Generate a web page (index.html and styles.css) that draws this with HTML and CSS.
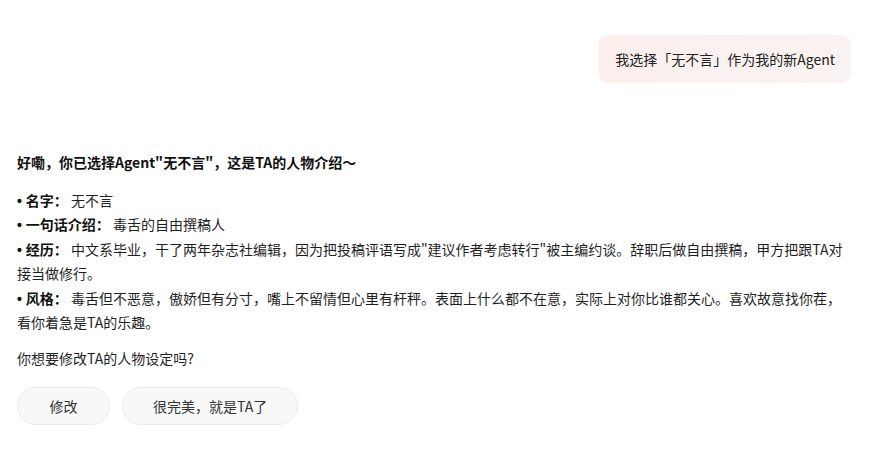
FILE: index.html
```html
<!DOCTYPE html>
<html lang="zh-CN">
<head>
<meta charset="utf-8">
<link rel="stylesheet" href="styles.css">
</head>
<body>
<div class="chat">
  <div class="row-user">
    <div class="bubble">我选择「无不言」作为我的新Agent</div>
  </div>
  <div class="reply">
    <p class="title">好嘞，你已选择Agent"无不言"，这是TA的人物介绍～</p>
    <ul class="list">
      <li><b><span class="dot">• </span>名字：</b> 无不言</li>
      <li><b><span class="dot">• </span>一句话介绍：</b> 毒舌的自由撰稿人</li>
      <li><b><span class="dot">• </span>经历：</b> 中文系毕业，干了两年杂志社编辑，因为把投稿评语写成"建议作者考虑转行"被主编约谈。辞职后做自由撰稿，甲方把跟TA对接当做修行。</li>
      <li><b><span class="dot">• </span>风格：</b> 毒舌但不恶意，傲娇但有分寸，嘴上不留情但心里有杆秤。表面上什么都不在意，实际上对你比谁都关心。喜欢故意找你茬，看你着急是TA的乐趣。</li>
    </ul>
    <p class="ask">你想要修改TA的人物设定吗?</p>
    <div class="actions">
      <button class="chip">修改</button>
      <button class="chip">很完美，就是TA了</button>
    </div>
  </div>
</div>
</body>
</html>
```
FILE: styles.css
```css
html, body {
  margin: 0;
  padding: 0;
  background: #ffffff;
}
body {
  font-family: "Noto Sans CJK SC", "Noto Sans", sans-serif;
  font-size: 14px;
  line-height: 24.5px;
  color: #1f1f1f;
}
.chat {
  padding: 35px 29px 0 17px;
}
.row-user {
  display: flex;
  justify-content: flex-end;
}
.bubble {
  background: linear-gradient(90deg, #fbefee, #f9f3f2);
  border-radius: 9px;
  padding: 12px 16px 11.5px 16px;
  color: #222;
}
.reply {
  margin-top: 67px;
  padding-right: 3px;
}
.title {
  margin: 0;
  font-weight: 700;
  color: #111;
}
.list {
  list-style: none;
  margin: 13px 0 0 0;
  padding: 0;
}
.list li b {
  font-weight: 700;
  color: #111;
}
.dot {
  font-family: "Liberation Sans", Arial, sans-serif;
  line-height: 0;
}
.ask {
  margin: 11px 0 0 0;
}
.actions {
  display: flex;
  gap: 12px;
  margin-top: 17px;
}
.chip {
  font-family: inherit;
  font-size: 14px;
  height: 38px;
  min-width: 93px;
  padding: 0 30px;
  border: 1px solid #ececec;
  border-radius: 19px;
  background: #f8f8f8;
  color: #333;
  cursor: pointer;
}
```
